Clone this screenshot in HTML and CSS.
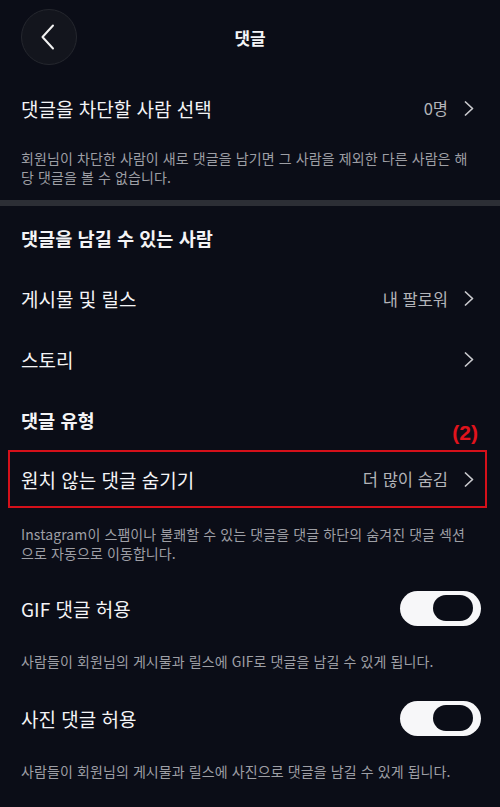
FILE: index.html
```html
<!DOCTYPE html>
<html lang="ko">
<head>
<meta charset="utf-8">
<link rel="stylesheet" href="styles.css">
</head>
<body>
<div class="page">
  <header class="header">
    <div class="back">
      <svg width="16" height="26" viewBox="0 0 16 26"><path d="M13 1.5 L2.5 13 L13 24.5" fill="none" stroke="#f2f2f2" stroke-width="2" stroke-linecap="round" stroke-linejoin="round"/></svg>
    </div>
    <div class="title">댓글</div>
    <div></div>
  </header>

  <div class="row row-first">
    <span class="label">댓글을 차단할 사람 선택</span>
    <span class="right"><span class="value">0명</span><svg class="chev" width="10" height="15" viewBox="0 0 10 15"><path d="M1.5 1 L8.5 7.5 L1.5 14" fill="none" stroke="#c9c9cd" stroke-width="1.7" stroke-linecap="round" stroke-linejoin="round"/></svg></span>
  </div>
  <p class="desc desc-first">회원님이 차단한 사람이 새로 댓글을 남기면 그 사람을 제외한 다른 사람은 해당 댓글을 볼 수 없습니다.</p>

  <div class="divider"></div>

  <div class="section">댓글을 남길 수 있는 사람</div>
  <div class="row row-posts">
    <span class="label">게시물 및 릴스</span>
    <span class="right"><span class="value">내 팔로워</span><svg class="chev" width="10" height="15" viewBox="0 0 10 15"><path d="M1.5 1 L8.5 7.5 L1.5 14" fill="none" stroke="#c9c9cd" stroke-width="1.7" stroke-linecap="round" stroke-linejoin="round"/></svg></span>
  </div>
  <div class="row">
    <span class="label">스토리</span>
    <span class="right"><svg class="chev" width="10" height="15" viewBox="0 0 10 15"><path d="M1.5 1 L8.5 7.5 L1.5 14" fill="none" stroke="#c9c9cd" stroke-width="1.7" stroke-linecap="round" stroke-linejoin="round"/></svg></span>
  </div>
  <div class="section section-type">
    <span>댓글 유형</span>
    <span class="mark">(2)</span>
  </div>
  <div class="highlight">
    <div class="row row-boxed">
      <span class="label">원치 않는 댓글 숨기기</span>
      <span class="right"><span class="value">더 많이 숨김</span><svg class="chev" width="10" height="15" viewBox="0 0 10 15"><path d="M1.5 1 L8.5 7.5 L1.5 14" fill="none" stroke="#c9c9cd" stroke-width="1.7" stroke-linecap="round" stroke-linejoin="round"/></svg></span>
    </div>
  </div>
  <p class="desc desc-hide">Instagram이 스팸이나 불쾌할 수 있는 댓글을 댓글 하단의 숨겨진 댓글 섹션으로 자동으로 이동합니다.</p>

  <div class="row row-toggle">
    <span class="label">GIF 댓글 허용</span>
    <span class="toggle"><span class="knob"></span></span>
  </div>
  <p class="desc desc-toggle">사람들이 회원님의 게시물과 릴스에 GIF로 댓글을 남길 수 있게 됩니다.</p>

  <div class="row row-toggle row-photo">
    <span class="label">사진 댓글 허용</span>
    <span class="toggle"><span class="knob"></span></span>
  </div>
  <p class="desc desc-toggle">사람들이 회원님의 게시물과 릴스에 사진으로 댓글을 남길 수 있게 됩니다.</p>
</div>
</body>
</html>
```

FILE: styles.css
```css
html, body {
  margin: 0;
  padding: 0;
  background: #0b0d17;
}
body {
  font-family: "Noto Sans CJK KR", "Noto Sans", sans-serif;
  color: #f4f4f6;
  width: 500px;
  height: 807px;
  overflow: hidden;
}
.page {
  display: flex;
  flex-direction: column;
}
.header {
  height: 74px;
  display: grid;
  grid-template-columns: 1fr auto 1fr;
  align-items: center;
}
.back {
  width: 54px;
  height: 54px;
  margin-left: 21px;
  border-radius: 50%;
  background: #13151d;
  border: 1px solid #25272e;
  display: flex;
  align-items: center;
  justify-content: center;
}
.back svg {
  margin-right: 3px;
}
.title {
  font-size: 17px;
  font-weight: 700;
  letter-spacing: -0.2px;
}
.row {
  height: 60px;
  padding: 0 26px 0 21px;
  display: flex;
  align-items: center;
  justify-content: space-between;
}
.row-first {
  margin-top: 4px;
}
.row-posts {
  height: 61px;
}
.label {
  font-size: 19px;
  letter-spacing: 0;
}
.right {
  display: flex;
  align-items: center;
  gap: 16px;
}
.value {
  font-size: 16.5px;
  color: #b3b4b9;
  letter-spacing: 0;
}
.chev {
  display: block;
}
.desc {
  margin: 0;
  padding: 0 20px 0 21px;
  font-size: 14px;
  line-height: 19px;
  color: #9e9fa5;
  letter-spacing: 0.1px;
}
.desc-first {
  margin-top: 11px;
}
.divider {
  height: 6px;
  margin-top: 13px;
  background: #2c2e35;
}
.section {
  height: 62px;
  padding: 0 22px 0 21px;
  display: flex;
  align-items: center;
  justify-content: space-between;
  font-size: 18.6px;
  font-weight: 700;
  letter-spacing: 0;
}
.section-type {
  height: 61px;
}
.mark {
  color: #e0131c;
  font-family: "Liberation Sans", "Noto Sans", sans-serif;
  font-size: 21px;
  font-weight: 700;
  align-self: flex-end;
  margin-bottom: 5px;
  line-height: 24px;
  letter-spacing: 0;
}
.highlight {
  margin: 0 13px 0 8px;
  border: 2px solid #d5101a;
}
.row-boxed {
  height: 54px;
  padding: 0 11px 0 11px;
}
.desc-hide {
  margin-top: 17px;
  padding-right: 28px;
}
.row-toggle {
  margin-top: 15px;
}
.row-photo {
  margin-top: 17px;
}
.desc-toggle {
  margin-top: 14px;
}
.toggle {
  width: 81px;
  height: 35px;
  margin-right: -7px;
  border-radius: 18px;
  background: #f7f7f9;
  display: flex;
  align-items: center;
  justify-content: flex-end;
  padding-right: 8px;
  box-sizing: border-box;
}
.knob {
  width: 40px;
  height: 26px;
  border-radius: 13px;
  background: #0b0d17;
}
```
